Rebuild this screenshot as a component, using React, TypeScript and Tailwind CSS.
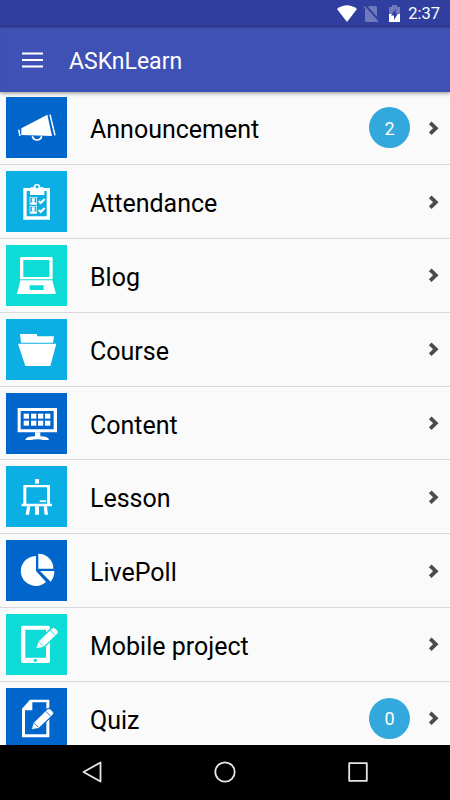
import type { ReactNode } from "react";
import { clsx } from "clsx";

// ─── Tile icons (drawn on a 183 unit square tile) ─────────────────────────────

const announcementIcon = (
  <>
    <path d="M46 94 124 53 138 117 46 114Z" fill="white" />
    <path d="M38 98 42 117M132 53 147 115" stroke="white" strokeWidth="4.5" />
    <path d="M79 118a14.5 15 0 0 0 28 0" stroke="white" strokeWidth="5" />
  </>
);

const attendanceIcon = (
  <>
    <path d="M52 51H132V146H52ZM62 60V136H122V60Z" fill="white" fillRule="evenodd" />
    <path d="M72 72V53Q72 50 76 49H83A10 10 0 0 1 103 49H110Q115 50 115 53V72Z" fill="white" />
    <circle cx="93" cy="47" r="4.5" fill="#0bafe4" />
    {[78, 105].map((y) => (
      <g key={y}>
        <rect x="72" y={y + 1} width="20" height="21" stroke="white" strokeWidth="2" />
        <circle cx="82" cy={y + 8} r="5" fill="white" />
        <path d={`M73 ${y + 22}v-4l6-3v-4h6v4l6 3v4z`} fill="white" />
        <path d={`M98 ${y + 12}l6 6 12-12`} stroke="white" strokeWidth="6" />
      </g>
    ))}
  </>
);

const blogIcon = (
  <>
    <path d="M46 36H136Q140 36 140 40V103H42V40Q42 36 46 36ZM52 45V96H130V45Z" fill="white" fillRule="evenodd" />
    <path d="M43 106H139L150 147H33ZM71 121V135H113V121Z" fill="white" fillRule="evenodd" />
  </>
);

const courseIcon = (
  <>
    <path d="M42 45H93V52H144L141 71H45Z" fill="white" />
    <path d="M36 74H151L133 141H58Z" fill="white" />
  </>
);

const contentIcon = (
  <>
    <path d="M35 45H153V118H35ZM44 54V109H143V54Z" fill="white" fillRule="evenodd" />
    {[53, 75, 96, 117].map((x) => (
      <g key={x} fill="white">
        <rect x={x} y="62" width="16" height="15" />
        <rect x={x} y="83" width="16" height="15" />
      </g>
    ))}
    <path d="M87 118H103V130Q128 130 129 141H113Q94 137 75 141H58Q59 130 87 130Z" fill="white" />
  </>
);

const lessonIcon = (
  <>
    <path d="M87 39H99V53H87Z" fill="white" />
    <path d="M52 57H132V113H138V121H47V113H52ZM61 64V113H123V64Z" fill="white" fillRule="evenodd" />
    <path d="M101 103H120V108H101Z" fill="white" />
    <path d="M63 121H73L69 146H59ZM87 121H99V146H87ZM113 121H123L126 146H116Z" fill="white" />
  </>
);

const pollIcon = (
  <>
    <path d="M90 48V93L120 126A45 45 0 1 1 90 48Z" fill="white" />
    <path d="M97 41A45 45 0 0 1 142 86H97Z" fill="white" />
    <path d="M102 93H145Q145 112 134 125Z" fill="white" />
  </>
);

const pencil = <path d="M0 0 6-19 46-58Q51-62 56-57L62-51Q65-47 61-43L20-4Z" />;

const projectIcon = (
  <>
    <path d="M51 35H127Q132 35 132 40V142Q132 147 127 147H50Q45 147 45 142V41Q45 35 51 35ZM58 47V131H120V47Z" fill="white" fillRule="evenodd" />
    <circle cx="88" cy="139" r="5" fill="#0ddbd6" />
    <g transform="translate(92 102)">
      <g fill="#0ddbd6" stroke="#0ddbd6" strokeWidth="9">{pencil}</g>
      <g fill="white" stroke="white">{pencil}</g>
      <path d="M41-53 56-39M7-18 19-5" stroke="#0ddbd6" strokeWidth="2.5" />
    </g>
  </>
);

const quizIcon = (
  <>
    <path d="M72 35H130V148H48V62ZM79 43V67H57V139H121V43Z" fill="white" fillRule="evenodd" />
    <g transform="translate(78 123)">
      <g fill="#0066cc" stroke="#0066cc" strokeWidth="8">{pencil}</g>
      <g fill="white" stroke="white">{pencil}</g>
      <path d="M41-53 56-39M7-18 19-5" stroke="#0066cc" strokeWidth="2.5" />
    </g>
  </>
);

// ─── Menu ─────────────────────────────────────────────────────────────────────

interface MenuItem {
  label: string;
  icon: ReactNode;
  tile: string;
  badge?: number;
}

const blue = "bg-[#0066cc]";
const sky = "bg-[#0bafe4]";
const aqua = "bg-[#0ddbd6]";

const menuItems: MenuItem[] = [
  { label: "Announcement", icon: announcementIcon, tile: blue, badge: 2 },
  { label: "Attendance", icon: attendanceIcon, tile: sky },
  { label: "Blog", icon: blogIcon, tile: aqua },
  { label: "Course", icon: courseIcon, tile: sky },
  { label: "Content", icon: contentIcon, tile: blue },
  { label: "Lesson", icon: lessonIcon, tile: sky },
  { label: "LivePoll", icon: pollIcon, tile: blue },
  { label: "Mobile project", icon: projectIcon, tile: aqua },
  { label: "Quiz", icon: quizIcon, tile: blue, badge: 0 },
];

function MenuRow({ item }: { item: MenuItem }) {
  return (
    <li className="flex h-[73.8px] shrink-0 items-center border-b border-[#d9d9d9] pr-[11px] pl-[6px]">
      <span className={clsx("size-[61px] shrink-0", item.tile)}>
        <svg viewBox="0 0 183 183" fill="none" className="size-full">
          {item.icon}
        </svg>
      </span>
      <span className="ml-[23px] flex-1 pt-[4px] text-[25px] leading-none text-black">{item.label}</span>
      {item.badge !== undefined && (
        <span className="mr-[18px] flex size-[41px] items-center justify-center rounded-full bg-[#33a8dc] pt-px text-[18px] text-white">
          {item.badge}
        </span>
      )}
      <svg width="11" height="14" viewBox="0 0 11 14" fill="none" className="shrink-0">
        <path d="M2.2 1.8 7.8 7.2 2.2 12.6" stroke="#4b4b4b" strokeWidth="3.8" />
      </svg>
    </li>
  );
}

function StatusBar() {
  return (
    <div className="flex h-[27px] shrink-0 items-center justify-end bg-[#303f9f] pr-[10px]">
      <svg width="20" height="18" viewBox="0 0 20 18" className="mr-[7px]">
        <path d="M0 4Q10-3.5 20 4L10 17Z" fill="white" />
      </svg>
      <svg width="15" height="18" viewBox="0 0 15 18" className="mr-[10px]">
        <path d="M5 1H11.5Q13 1 13 2.5V17H2Q1 17 1 16V5Z" fill="#7079bb" />
        <path d="M1.500 .5 15 15.500" stroke="#303f9f" strokeWidth="2" />
        <path d="M0 1.500 14 17" stroke="#7079bb" strokeWidth="1.4" />
      </svg>
      <svg width="11" height="18" viewBox="0 0 11 18" className="mr-[8px]">
        <path d="M3 0H8V2H11V9H0V2H3Z" fill="#7079bb" />
        <path d="M0 9H11V16.5Q11 17 10.5 17H.5Q0 17 0 16.5Z" fill="white" />
        <path d="M7 3.5 2 10.5H5V15L9 8.5H6.5Z" fill="#303f9f" />
      </svg>
      <span className="pt-[2px] text-[16.5px] leading-none text-white">2:37</span>
    </div>
  );
}

function AppBar() {
  return (
    <header className="z-10 flex h-[64.5px] shrink-0 items-center bg-[#3f51b5] pl-[22px] shadow-[0_1px_4px_rgba(0,0,0,0.45),inset_0_1px_1px_rgba(0,0,0,0.2)]">
      <svg width="21" height="16" viewBox="0 0 21 16" className="mt-px">
        <path d="M0 1.500H21M0 8H21M0 14.500H21" stroke="white" strokeWidth="2" />
      </svg>
      <h1 className="ml-[26px] pt-[4px] text-[23px] leading-none text-white">ASKnLearn</h1>
    </header>
  );
}

function NavigationBar() {
  return (
    <nav className="flex h-[55px] shrink-0 items-center justify-between bg-black pr-[82px] pb-px pl-[82px]">
      <svg width="20" height="22" viewBox="0 0 20 22" fill="none" stroke="#e6e6e6" strokeWidth="1.8" strokeLinejoin="round">
        <path d="M1.5 11 18.500 1.500V20.500Z" />
      </svg>
      <svg width="22" height="22" viewBox="0 0 22 22" fill="none" stroke="#e6e6e6" strokeWidth="1.8">
        <circle cx="11" cy="11" r="9.7" />
      </svg>
      <svg width="20" height="20" viewBox="0 0 20 20" fill="none" stroke="#e6e6e6" strokeWidth="1.8" strokeLinejoin="round">
        <rect x="1.2" y="1.2" width="17.6" height="17.6" />
      </svg>
    </nav>
  );
}

export default function App() {
  return (
    <div className="flex h-screen flex-col overflow-hidden bg-[#fafafa] font-['Roboto',sans-serif]">
      <StatusBar />
      <AppBar />
      <ul className="flex min-h-0 flex-1 flex-col overflow-hidden">
        {menuItems.map((item) => (
          <MenuRow key={item.label} item={item} />
        ))}
      </ul>
      <NavigationBar />
    </div>
  );
}
